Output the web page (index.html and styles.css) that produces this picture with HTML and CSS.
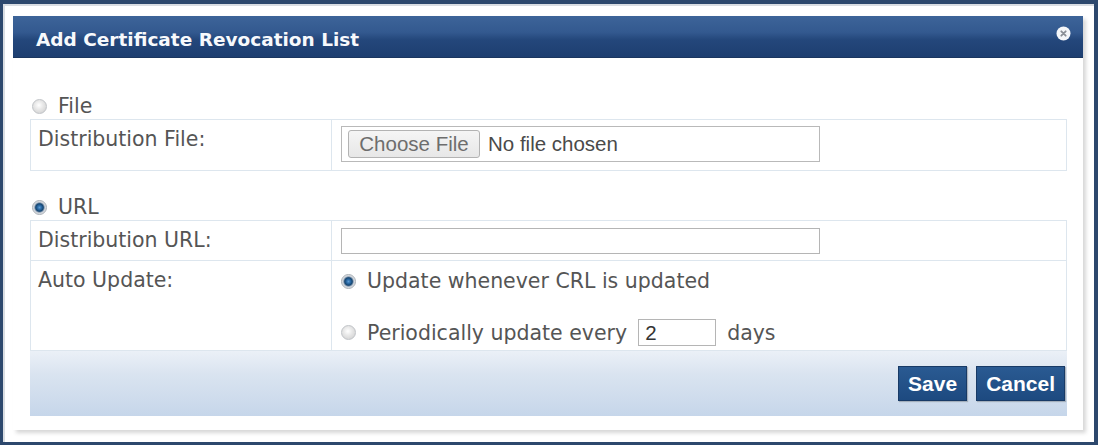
FILE: index.html
```html
<!DOCTYPE html>
<html lang="en">
<head>
<meta charset="utf-8">
<title>Add Certificate Revocation List</title>
<link rel="stylesheet" href="styles.css">
</head>
<body>
<div class="screen">
  <div class="dialog">
    <div class="dialog-header">
      <span class="dialog-title">Add Certificate Revocation List</span>
      <span class="close-btn" aria-label="Close">
        <svg width="15" height="15" viewBox="0 0 15 15">
          <circle cx="7.5" cy="7.5" r="7" fill="#f4f6f9"/>
          <path d="M5.3 5.3 L9.7 9.7 M9.7 5.3 L5.3 9.7" stroke="#8a8f96" stroke-width="1.8" stroke-linecap="round"/>
        </svg>
      </span>
    </div>
    <div class="dialog-body">
      <div class="option"><span class="radio"></span><span class="option-text">File</span></div>
      <div class="form-grid">
        <div class="cell label">Distribution File:</div>
        <div class="cell value value-file">
          <div class="file-box">
            <span class="file-btn">Choose File</span>
            <span class="file-name">No file chosen</span>
          </div>
        </div>
      </div>

      <div class="option option-url"><span class="radio checked"></span><span class="option-text">URL</span></div>
      <div class="form-grid">
        <div class="cell label">Distribution URL:</div>
        <div class="cell value value-url"><div class="text-input url-input"></div></div>
        <div class="cell label label-tall">Auto Update:</div>
        <div class="cell value value-choices">
          <div class="choice choice-first"><span class="radio checked"></span><span class="option-text">Update whenever CRL is updated</span></div>
          <div class="choice choice-second">
            <span class="radio"></span><span class="option-text">Periodically update every</span>
            <div class="text-input days-input">2</div>
            <span class="option-text days">days</span>
          </div>
        </div>
      </div>

      <div class="dialog-footer">
        <button class="btn">Save</button>
        <button class="btn">Cancel</button>
      </div>
    </div>
  </div>
</div>
</body>
</html>
```
FILE: styles.css
```css
html, body {
  margin: 0;
  padding: 0;
}

body {
  width: 1098px;
  height: 445px;
  overflow: hidden;
  background: #2d486d;
  font-family: "DejaVu Sans", Verdana, sans-serif;
}

.screen {
  box-sizing: border-box;
  width: 1098px;
  height: 445px;
  border-style: solid;
  border-color: #2d486d;
  border-width: 4px 4px 3px 3px;
  background: #ffffff;
  padding: 12px 11px 12px 10px;
  box-shadow: inset 2px 2px 0 #d9dde2;
}

.dialog {
  width: 1070px;
  height: 414px;
  background: #ffffff;
  box-shadow: 3px 3px 4px rgba(0, 0, 0, 0.16);
  display: flex;
  flex-direction: column;
}

/* title bar */
.dialog-header {
  height: 42px;
  flex: none;
  display: flex;
  align-items: flex-start;
  padding: 0 12px 0 23px;
  background: linear-gradient(#3d6499 0%, #33598f 40%, #24477b 58%, #1d3e70 100%);
  border-bottom: 1px solid #1a365f;
  box-sizing: border-box;
}

.dialog-title {
  padding-top: 13px;
  line-height: 22px;
  font-size: 18.5px;
  font-weight: bold;
  color: #f7f9fc;
}

.close-btn {
  margin-left: auto;
  margin-top: 10px;
  width: 15px;
  height: 15px;
  display: block;
}

.close-btn svg {
  display: block;
}

/* body */
.dialog-body {
  padding: 35px 16px 14px 17px;
}

.option {
  height: 26px;
  display: flex;
  align-items: center;
  padding-left: 2px;
}

.option-url {
  margin-top: 23px;
}

.option-text {
  font-size: 20.5px;
  line-height: 22px;
  color: #555555;
  white-space: nowrap;
}

.radio {
  box-sizing: border-box;
  flex: none;
  width: 15px;
  height: 15px;
  border-radius: 50%;
  border: 1px solid #c0c3c7;
  background: radial-gradient(circle at 45% 40%, #ffffff 0, #e8e8e8 40%, #cbcbcb 100%);
  margin-right: 11px;
}

.radio.checked {
  border-color: #a7adb4;
  background: radial-gradient(circle at 50% 50%, #5c9bd2 0, #2b6aa6 2px, #15456f 3.8px, #6f89a6 4.6px, #c6ccd3 5.4px, #eceef1 7px);
}

/* form tables */
.form-grid {
  display: grid;
  grid-template-columns: 300px 1fr;
  gap: 1px;
  background: #dde6ee;
  border: 1px solid #dde6ee;
}

.cell {
  background: #ffffff;
}

.label {
  padding: 10px 0 0 7px;
  font-size: 20.5px;
  line-height: 18px;
  color: #555555;
}

.value {
  padding-left: 9px;
}

.value-file {
  height: 50px;
  box-sizing: border-box;
  padding-top: 6px;
}

.file-box {
  box-sizing: border-box;
  width: 479px;
  height: 36px;
  border: 1px solid #b9b9b9;
  display: flex;
  align-items: center;
  padding-left: 6px;
  font-family: "Liberation Sans", Arial, sans-serif;
  font-size: 20.5px;
}

.file-btn {
  box-sizing: border-box;
  width: 132px;
  height: 28px;
  border: 1px solid #b3b3b3;
  border-radius: 3px;
  background: linear-gradient(#f5f5f5, #e7e7e7);
  color: #6d6d6d;
  line-height: 26px;
  text-align: center;
}

.file-name {
  margin-left: 8px;
  color: #4a4a4a;
}

.value-url {
  height: 39px;
  box-sizing: border-box;
  padding-top: 7px;
}

.text-input {
  box-sizing: border-box;
  border: 1px solid #b5b5b5;
  background: #ffffff;
  font-family: "Liberation Sans", Arial, sans-serif;
  font-size: 20.5px;
  color: #333333;
}

.url-input {
  width: 479px;
  height: 26px;
}

.value-choices {
  height: 89px;
  box-sizing: border-box;
  padding-top: 9px;
  display: flex;
  flex-direction: column;
}

.choice {
  display: flex;
  align-items: center;
}

.choice-first {
  height: 22px;
}

.choice-second {
  margin-top: 27px;
  height: 27px;
}

.days-input {
  width: 78px;
  height: 27px;
  margin: 0 11px;
  padding-left: 6px;
  line-height: 25px;
}

/* button bar */
.dialog-footer {
  height: 65px;
  box-sizing: border-box;
  padding: 15px 2px 0 0;
  display: flex;
  justify-content: flex-end;
  align-items: flex-start;
  gap: 9px;
  background: linear-gradient(#ebf0f7 0%, #dae4f0 35%, #c6d6ea 100%);
}

.btn {
  height: 35px;
  padding: 0 9px;
  border: 1px solid #183a66;
  background: linear-gradient(#2a5a92, #1d4a80);
  color: #ffffff;
  font-family: "Liberation Sans", Arial, sans-serif;
  font-size: 21px;
  font-weight: bold;
  line-height: 33px;
  box-shadow: 1px 1px 1px rgba(0, 0, 0, 0.2);
}
```
